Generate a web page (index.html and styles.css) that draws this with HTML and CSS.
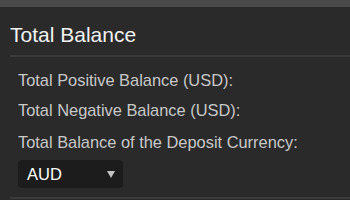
FILE: index.html
```html
<!DOCTYPE html>
<html>
<head>
<meta charset="utf-8">
<link rel="stylesheet" href="styles.css">
</head>
<body>
<div class="topbar"></div>
<div class="panel">
  <h2 class="title">Total Balance</h2>
  <div class="content">
    <div class="row">Total Positive Balance (USD):</div>
    <div class="row">Total Negative Balance (USD):</div>
    <div class="row row-last">Total Balance of the Deposit Currency:</div>
    <div class="select">
      <span class="select-value">AUD</span>
      <svg class="select-arrow" width="8" height="7" viewBox="0 0 8 7"><polygon points="0,0 8,0 4,7" fill="#c4c4c4"/></svg>
    </div>
  </div>
</div>
</body>
</html>
```
FILE: styles.css
```css
html, body {
  margin: 0;
  padding: 0;
  background: #2a2a2a;
  width: 350px;
  height: 200px;
  overflow: hidden;
  font-family: "Liberation Sans", Arial, sans-serif;
}
.topbar {
  height: 7px;
  background: #4a4a4a;
}
.panel {
  padding: 16px 0 0 10px;
}
.title {
  margin: 0;
  font-size: 21px;
  font-weight: normal;
  line-height: 24px;
  color: #f2f2f2;
  padding-bottom: 8px;
  border-bottom: 2px solid #3a3a3a;
}
.content {
  padding: 14px 0 9px 8px;
  border-bottom: 2px solid #3a3a3a;
}
.row {
  font-size: 16.4px;
  line-height: 19px;
  color: #c8c8c8;
  margin-bottom: 11px;
}
.row + .row {
  margin-bottom: 13px;
}
.row.row-last {
  margin-bottom: 8px;
}
.select {
  width: 105px;
  height: 28px;
  box-sizing: border-box;
  background: #1c1c1c;
  border-radius: 4px;
  display: flex;
  align-items: center;
  justify-content: space-between;
  padding: 0 8px 0 9px;
}
.select-value {
  color: #ffffff;
  font-size: 16.5px;
}
.select-arrow {
  display: block;
}
```
